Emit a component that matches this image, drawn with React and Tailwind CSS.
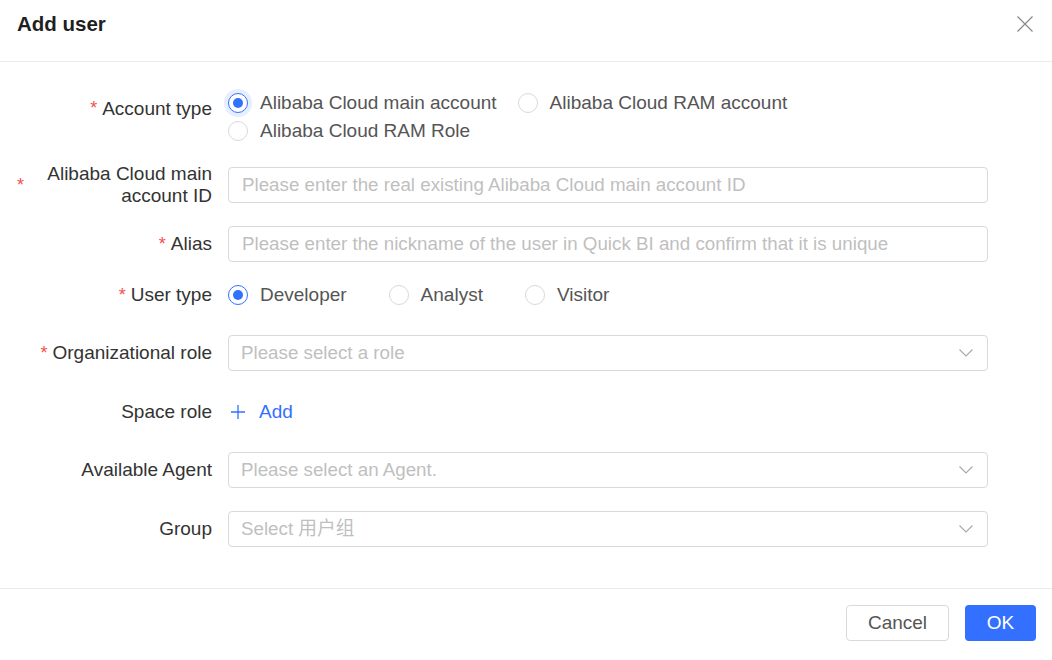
import { useState } from "react";

const font = { fontFamily: '"Liberation Sans", Arial, "Noto Sans CJK SC", sans-serif' };

function Radio({ label, checked, halo, className = "" }) {
  return (
    <label className={`flex items-center cursor-pointer ${className}`}>
      <span
        className={`relative flex h-5 w-5 items-center justify-center rounded-full border bg-white ${
          checked ? "border-[#3370ff]" : "border-[#d9d9d9]"
        } ${halo ? "ring-[4px] ring-[#e6eeff]" : ""}`}
      >
        {checked && <span className="h-[10px] w-[10px] rounded-full bg-[#3370ff]" />}
      </span>
      <span className="ml-[12px] text-[19px] text-[#555]">{label}</span>
    </label>
  );
}

function Chevron() {
  return (
    <svg width="16" height="10" viewBox="0 0 16 10" fill="none">
      <polyline points="1.5,1.5 8,8 14.5,1.5" stroke="#a8a8a8" strokeWidth="1.1" />
    </svg>
  );
}

function FieldLabel({ required, children }) {
  return (
    <div className="flex w-[228px] shrink-0 items-center justify-end pl-[17px] pr-4">
      {required && <span className="mr-[5px] text-[18px] text-[#f5504f]">*</span>}
      <span className="text-right text-[19px] leading-[22px] text-[#333]">{children}</span>
    </div>
  );
}

function TextInput({ placeholder }) {
  return (
    <input
      type="text"
      placeholder={placeholder}
      className="h-9 w-[760px] rounded-[4px] border border-[#d9d9d9] px-[13px] text-[18.75px] text-[#333] outline-none placeholder:text-[#bfbfbf]"
      style={font}
    />
  );
}

function Select({ placeholder }) {
  return (
    <div className="flex h-9 w-[760px] items-center justify-between rounded-[4px] border border-[#d9d9d9] pl-[12px] pr-[13px]">
      <span className="text-[18.75px] text-[#bfbfbf]">{placeholder}</span>
      <Chevron />
    </div>
  );
}

export default function App() {
  const [accountType] = useState("main");
  const [userType] = useState("developer");

  return (
    <div className="h-[660px] w-[1052px] bg-white" style={font}>
      {/* Header */}
      <div className="flex h-[62px] items-start justify-between border-b border-[#ebebeb] pl-[17px] pr-[18px] pt-[10px]">
        <h1 className="text-[20.5px] font-bold leading-7 text-[#1f1f1f]">Add user</h1>
        <button className="mt-[5px]">
          <svg width="18" height="18" viewBox="0 0 18 18" fill="none">
            <path d="M1.5 1.5 L16.5 16.5 M16.5 1.5 L1.5 16.5" stroke="#8c8c8c" strokeWidth="1.3" />
          </svg>
        </button>
      </div>

      {/* Form body */}
      <div className="pb-[41px] pt-[27px]">
        <div className="flex">
          <div className="flex h-9 items-start pt-[6px]">
            <FieldLabel required>Account type</FieldLabel>
          </div>
          <div className="flex flex-col">
            <div className="flex h-7 items-center">
              <Radio label="Alibaba Cloud main account" checked={accountType === "main"} halo className="mr-[21px]" />
              <Radio label="Alibaba Cloud RAM account" checked={accountType === "ram"} />
            </div>
            <div className="flex h-7 items-center">
              <Radio label="Alibaba Cloud RAM Role" checked={accountType === "role"} />
            </div>
          </div>
        </div>

        <div className="mt-[22px] flex h-9 items-center">
          <FieldLabel required>Alibaba Cloud main account ID</FieldLabel>
          <TextInput placeholder="Please enter the real existing Alibaba Cloud main account ID" />
        </div>

        <div className="mt-[23px] flex items-center">
          <FieldLabel required>Alias</FieldLabel>
          <TextInput placeholder="Please enter the nickname of the user in Quick BI and confirm that it is unique" />
        </div>

        <div className="mt-[15px] flex h-9 items-center">
          <FieldLabel required>User type</FieldLabel>
          <Radio label="Developer" checked={userType === "developer"} className="mr-[42px]" />
          <Radio label="Analyst" checked={userType === "analyst"} className="mr-[42px]" />
          <Radio label="Visitor" checked={userType === "visitor"} />
        </div>

        <div className="mt-[22px] flex items-center">
          <FieldLabel required>Organizational role</FieldLabel>
          <Select placeholder="Please select a role" />
        </div>

        <div className="mt-[23px] flex h-9 items-center">
          <FieldLabel>Space role</FieldLabel>
          <button className="flex items-center text-[#3370ff]">
            <svg width="16" height="16" viewBox="0 0 16 16" fill="none" className="ml-[2px]">
              <path d="M8 1 V15 M1 8 H15" stroke="#3370ff" strokeWidth="1.3" />
            </svg>
            <span className="ml-[13px] text-[19px]">Add</span>
          </button>
        </div>

        <div className="mt-[22px] flex items-center">
          <FieldLabel>Available Agent</FieldLabel>
          <Select placeholder="Please select an Agent." />
        </div>

        <div className="mt-[23px] flex items-center">
          <FieldLabel>Group</FieldLabel>
          <Select placeholder="Select 用户组" />
        </div>
      </div>

      {/* Footer */}
      <div className="flex justify-end gap-4 border-t border-[#ebebeb] pr-4 pt-4">
        <button className="h-9 w-[103px] rounded-[4px] border border-[#d9d9d9] bg-white text-[19px] text-[#555]">
          Cancel
        </button>
        <button className="h-9 w-[71px] rounded-[4px] bg-[#3370ff] text-[19px] text-white">OK</button>
      </div>
    </div>
  );
}
